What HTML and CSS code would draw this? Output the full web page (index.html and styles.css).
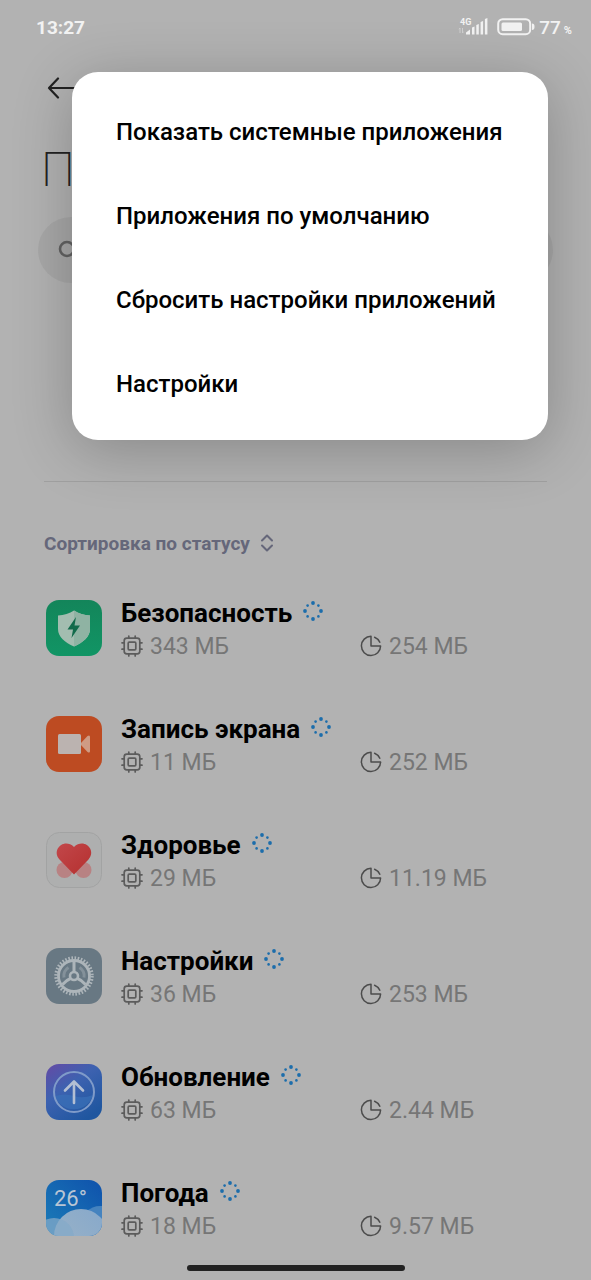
FILE: index.html
```html
<!DOCTYPE html>
<html lang="ru">
<head>
    <meta charset="UTF-8">
    <meta name="viewport" content="width=device-width, initial-scale=1.0">
    <title>Приложения</title>
    <link rel="stylesheet" href="styles.css">
</head>
<body>
    <!-- shared icons -->
    <svg class="sprite" aria-hidden="true">
        <symbol id="chip" viewBox="0 0 22 22">
            <g fill="none" stroke="#5c5c5c" stroke-width="1.7" stroke-linecap="round">
                <rect x="3.2" y="3.2" width="15.6" height="15.6" rx="2.6"/>
                <rect x="7.2" y="7.2" width="7.6" height="7.6" rx="1"/>
                <path d="M7.8 3V1M14.2 3V1M7.8 21v-2M14.2 21v-2M3 7.8H1M3 14.2H1M21 7.8h-2M21 14.2h-2"/>
            </g>
        </symbol>
        <symbol id="pie" viewBox="0 0 22 22">
            <g fill="none" stroke="#4c4c4c" stroke-width="1.5" stroke-linecap="round" stroke-linejoin="round">
                <path d="M11 1.3A9.6 9.6 0 1 0 20.6 11H11z"/>
                <path d="M14.6 2.2A9.6 9.6 0 0 1 19.8 7.3"/>
            </g>
        </symbol>
        <symbol id="loader" viewBox="0 0 20 20">
            <g fill="#1c6dab">
                <circle cx="10" cy="2" r="1.9"/>
                <circle cx="10" cy="18" r="1.9"/>
                <circle cx="2" cy="10" r="1.9"/>
                <circle cx="18" cy="10" r="1.9"/>
                <circle cx="4.6" cy="4.6" r="1.3"/>
                <circle cx="15.4" cy="4.6" r="1.3"/>
                <circle cx="4.6" cy="15.4" r="1.3"/>
                <circle cx="15.4" cy="15.4" r="1.3"/>
            </g>
        </symbol>
    </svg>

    <div class="status-bar">
        <span class="clock">13:27</span>
        <div class="status-icons">
            <svg class="signal" width="31" height="22" viewBox="0 0 31 22">
                <text class="network" x="2" y="9">4G</text>
                <path d="M2 12v5M1 13.300l1-1.300M4.500 12v5M5.500 15.700l-1 1.300" stroke="#cfcfcf" stroke-width="1" fill="none"/>
                <path d="M8 18.500v-2l4-3v5zM14 18.500v-7l2.500-1v8zM18.300 18.500V9l2.500-1v10.500zM22.600 18.500V6l2.500-1v13.500zM26.900 18.500V3l2.500-1v16.500z" fill="#f2f2f2"/>
            </svg>
            <svg width="38" height="18" viewBox="0 0 38 18">
                <rect x="1.200" y="1.200" width="32" height="15" rx="4.500" fill="none" stroke="#f2f2f2" stroke-width="2"/>
                <rect x="4.500" y="4.500" width="20.500" height="8.500" rx="1.500" fill="#f2f2f2"/>
                <path d="M35 5.500q2.500 0 2.500 3.200T35 12z" fill="#f2f2f2"/>
            </svg>
            <span class="battery">77<small>%</small></span>
        </div>
    </div>

    <main class="page">
        <button type="button" class="back" aria-label="Назад">
            <svg width="32" height="24" viewBox="0 0 32 24" fill="none" stroke="#222" stroke-width="2.200" stroke-linecap="round" stroke-linejoin="round">
                <path d="M11 2.500L2 12l9 9.500M2 12h29"/>
            </svg>
        </button>
        <h1>Приложения</h1>

        <div class="search">
            <svg width="24" height="24" viewBox="0 0 24 24" fill="none" stroke="#626262" stroke-width="2.600">
                <circle cx="9" cy="11" r="7"/>
                <path d="M14 16l7 7"/>
            </svg>
            <input type="search" aria-label="Поиск">
        </div>

        <section class="apps">
            <button type="button" class="sort">
                Сортировка по статусу
                <svg width="14" height="18" viewBox="0 0 14 18" fill="none" stroke="#65677a" stroke-width="2" stroke-linecap="round" stroke-linejoin="round">
                    <path d="M2 6.500l5-5 5 5M2 11.500l5 5 5-5"/>
                </svg>
            </button>

            <ul class="app-list">
                <li class="app">
                    <svg class="app-icon" viewBox="0 0 56 56">
                        <defs>
                            <linearGradient id="green" x1="0" y1="0" x2="0" y2="1">
                                <stop offset="0" stop-color="#13855a"/>
                                <stop offset="1" stop-color="#119565"/>
                            </linearGradient>
                        </defs>
                        <rect width="56" height="56" rx="13" fill="url(#green)"/>
                        <path d="M28 10.500c4.500 3 10 4.500 16 5V29c0 8-7 13.500-16 17.500C19 42.500 12 37 12 29V15.500c6-.5 11.500-2 16-5z" fill="#a3bdb0"/>
                        <path d="M28 10.500c4.500 3 10 4.500 16 5V29c0 8-7 13.500-16 17.500z" fill="#8fb3a3"/>
                        <path d="M30 17L21.500 29.500H27L25.500 38 34 25.500h-5.500z" fill="#126b4b"/>
                    </svg>
                    <div class="app-info">
                        <h2>Безопасность <svg class="loader"><use href="#loader"/></svg></h2>
                        <div class="stats">
                            <span><svg><use href="#chip"/></svg>343 МБ</span>
                            <span><svg><use href="#pie"/></svg>254 МБ</span>
                        </div>
                    </div>
                </li>
                <li class="app">
                    <svg class="app-icon" viewBox="0 0 56 56">
                        <rect width="56" height="56" rx="13" fill="#bd4b22"/>
                        <path d="M34 28l7.500-8q2.500-1.500 2.500 1v14q0 2.500-2.500 1z" fill="#cf9b84"/>
                        <rect x="12" y="18" width="23" height="20" rx="1.500" fill="#bbb3b0"/>
                    </svg>
                    <div class="app-info">
                        <h2>Запись экрана <svg class="loader"><use href="#loader"/></svg></h2>
                        <div class="stats">
                            <span><svg><use href="#chip"/></svg>11 МБ</span>
                            <span><svg><use href="#pie"/></svg>252 МБ</span>
                        </div>
                    </div>
                </li>
                <li class="app">
                    <svg class="app-icon" viewBox="0 0 56 56">
                        <defs>
                            <linearGradient id="heart" x1="0" y1="0" x2="1" y2="1">
                                <stop offset="0" stop-color="#c2474a"/>
                                <stop offset="1" stop-color="#b5302f"/>
                            </linearGradient>
                        </defs>
                        <rect x=".5" y=".5" width="55" height="55" rx="13" fill="#aeafaf" stroke="#a2a3a3"/>
                        <circle cx="18.500" cy="38" r="8" fill="#b88283"/>
                        <circle cx="37.500" cy="38" r="8" fill="#b88283"/>
                        <path d="M28 42.500L13.500 27.500C5 18 18 5.500 28 15c10-9.500 23 3 14.500 12.500z" fill="url(#heart)"/>
                    </svg>
                    <div class="app-info">
                        <h2>Здоровье <svg class="loader"><use href="#loader"/></svg></h2>
                        <div class="stats">
                            <span><svg><use href="#chip"/></svg>29 МБ</span>
                            <span><svg><use href="#pie"/></svg>11.19 МБ</span>
                        </div>
                    </div>
                </li>
                <li class="app">
                    <svg class="app-icon" viewBox="0 0 56 56">
                        <rect width="56" height="56" rx="13" fill="#687883"/>
                        <path d="M22.500 19.500a10 10 0 0 0-4.500 10M33.500 19.500a10 10 0 0 1 4.500 10" fill="none" stroke="#84919a" stroke-width="3"/>
                        <g fill="none" stroke="#adb5ba">
                            <circle cx="28" cy="28" r="18" stroke-width="3.400" stroke-dasharray="1.570 1.572"/>
                            <circle cx="28" cy="28" r="15.500" stroke-width="2.800"/>
                            <circle cx="28" cy="28" r="4" stroke-width="2.600"/>
                            <path d="M28 24V13M24.500 30.500q-4 1.500-8 6M31.500 30.500q4 1.500 8 6" stroke-width="3"/>
                        </g>
                    </svg>
                    <div class="app-info">
                        <h2>Настройки <svg class="loader"><use href="#loader"/></svg></h2>
                        <div class="stats">
                            <span><svg><use href="#chip"/></svg>36 МБ</span>
                            <span><svg><use href="#pie"/></svg>253 МБ</span>
                        </div>
                    </div>
                </li>
                <li class="app">
                    <svg class="app-icon" viewBox="0 0 56 56">
                        <defs>
                            <linearGradient id="update" x1="0" y1="0" x2=".7" y2="1">
                                <stop offset="0" stop-color="#654aa5"/>
                                <stop offset=".45" stop-color="#3d62b0"/>
                                <stop offset="1" stop-color="#1f569f"/>
                            </linearGradient>
                        </defs>
                        <rect width="56" height="56" rx="13" fill="url(#update)"/>
                        <path d="M9 32q10-3 19 0t19-1a20 20 0 0 1-38 1z" fill="#3b70b8" opacity=".7"/>
                        <circle cx="28" cy="28" r="20" fill="none" stroke="#7f9bc9" stroke-width="2"/>
                        <path d="M28 39V18M19 26.500l9-9 9 9" fill="none" stroke="#b3bfd3" stroke-width="2.600" stroke-linecap="round" stroke-linejoin="round"/>
                    </svg>
                    <div class="app-info">
                        <h2>Обновление <svg class="loader"><use href="#loader"/></svg></h2>
                        <div class="stats">
                            <span><svg><use href="#chip"/></svg>63 МБ</span>
                            <span><svg><use href="#pie"/></svg>2.44 МБ</span>
                        </div>
                    </div>
                </li>
                <li class="app">
                    <svg class="app-icon" viewBox="0 0 56 56">
                        <defs>
                            <linearGradient id="sky" x1="1" y1="0" x2="0" y2="1">
                                <stop offset="0" stop-color="#0f52ac"/>
                                <stop offset="1" stop-color="#1b7db8"/>
                            </linearGradient>
                            <linearGradient id="cloud" x1="1" y1="0" x2="0" y2="1">
                                <stop offset="0" stop-color="#86a8cb"/>
                                <stop offset="1" stop-color="#9db4c6"/>
                            </linearGradient>
                            <clipPath id="tile"><rect width="56" height="56" rx="13"/></clipPath>
                        </defs>
                        <g clip-path="url(#tile)">
                            <rect width="56" height="56" fill="url(#sky)"/>
                            <circle cx="54" cy="45" r="19" fill="#4583bf"/>
                            <circle cx="35" cy="56" r="27" fill="url(#cloud)"/>
                            <circle cx="8" cy="58" r="20" fill="#84a9c8" opacity=".75"/>
                        </g>
                        <text class="temp" x="8" y="26">26°</text>
                    </svg>
                    <div class="app-info">
                        <h2>Погода <svg class="loader"><use href="#loader"/></svg></h2>
                        <div class="stats">
                            <span><svg><use href="#chip"/></svg>18 МБ</span>
                            <span><svg><use href="#pie"/></svg>9.57 МБ</span>
                        </div>
                    </div>
                </li>
            </ul>
        </section>
    </main>

    <div class="menu" role="menu">
        <button type="button" role="menuitem">Показать системные приложения</button>
        <button type="button" role="menuitem">Приложения по умолчанию</button>
        <button type="button" role="menuitem">Сбросить настройки приложений</button>
        <button type="button" role="menuitem">Настройки</button>
    </div>

    <div class="home-bar"></div>
</body>
</html>
```

FILE: styles.css
```css
* {
    margin: 0;
    padding: 0;
    box-sizing: border-box;
}

body {
    position: relative;
    min-height: 100vh;
    background-color: #b2b2b2;
    color: #000000;
    font-family: Roboto, "Noto Sans", sans-serif;
}

button {
    border: none;
    background: none;
    font-family: inherit;
    text-align: left;
    cursor: pointer;
}

.sprite {
    position: absolute;
    width: 0;
    height: 0;
}

/* status bar */
.status-bar {
    display: flex;
    justify-content: space-between;
    align-items: center;
    height: 54px;
    padding: 0 19px 0 36px;
    color: #f2f2f2;
}

.clock {
    font-size: 19px;
    font-weight: 700;
}

.status-icons {
    display: flex;
    align-items: center;
    gap: 4px;
}

.signal {
    margin-right: 4px;
}

.network {
    font-size: 9px;
    font-weight: 700;
    fill: #f2f2f2;
}

.battery {
    font-size: 19px;
    font-weight: 500;
}

.battery small {
    margin-left: 3px;
    font-size: 11px;
    font-weight: 700;
}

/* page */
.page {
    padding: 0 38px;
}

.back {
    display: flex;
    align-items: center;
    height: 68px;
    padding-left: 9px;
}

h1 {
    padding: 20px 3px 19px;
    font-size: 48px;
    font-weight: 200;
    line-height: 56px;
    color: #222222;
}

.search {
    display: flex;
    align-items: center;
    gap: 12px;
    height: 66px;
    margin-bottom: 198px;
    padding: 0 20px;
    border-radius: 33px;
    background-color: #a8a8a8;
}

.search input {
    flex: 1;
    min-width: 0;
    border: none;
    outline: none;
    background: none;
    font-size: 23px;
}

.apps {
    margin: 0 6px;
    border-top: 1px solid #a0a0a0;
}

.sort {
    display: flex;
    align-items: center;
    gap: 10px;
    height: 88px;
    padding-top: 34px;
    font-size: 19px;
    font-weight: 700;
    color: #65677a;
}

.app-list {
    list-style: none;
}

.app {
    display: flex;
    align-items: center;
    gap: 19px;
    height: 116px;
    padding-left: 2px;
}

.app-icon {
    flex: none;
    width: 56px;
    height: 56px;
}

.app-info {
    flex: 1;
    padding-top: 3px;
}

.app h2 {
    display: flex;
    align-items: center;
    gap: 11px;
    font-size: 26px;
    font-weight: 700;
    line-height: 34px;
}

.loader {
    width: 20px;
    height: 20px;
    margin-bottom: 4px;
}

.stats {
    display: grid;
    grid-template-columns: 239px 1fr;
    font-size: 23px;
    line-height: 33px;
    color: #767676;
}

.stats span {
    display: flex;
    align-items: center;
    gap: 7px;
}

.stats svg {
    width: 22px;
    height: 22px;
    margin-bottom: 2px;
}

.temp {
    font-size: 22px;
    fill: #b8c5d4;
}

/* popup menu */
.menu {
    position: absolute;
    top: 72px;
    left: 72px;
    right: 43px;
    padding: 16px 0;
    border-radius: 26px;
    background-color: #ffffff;
    box-shadow: 0 10px 60px rgba(0, 0, 0, 0.24);
}

.menu button {
    display: block;
    width: 100%;
    height: 84px;
    padding: 3px 44px 0;
    font-size: 24px;
    font-weight: 500;
    color: #000000;
    white-space: nowrap;
}

.home-bar {
    position: fixed;
    bottom: 9px;
    left: 50%;
    width: 218px;
    height: 6px;
    margin-left: -109px;
    border-radius: 3px;
    background-color: #222222;
}
```
